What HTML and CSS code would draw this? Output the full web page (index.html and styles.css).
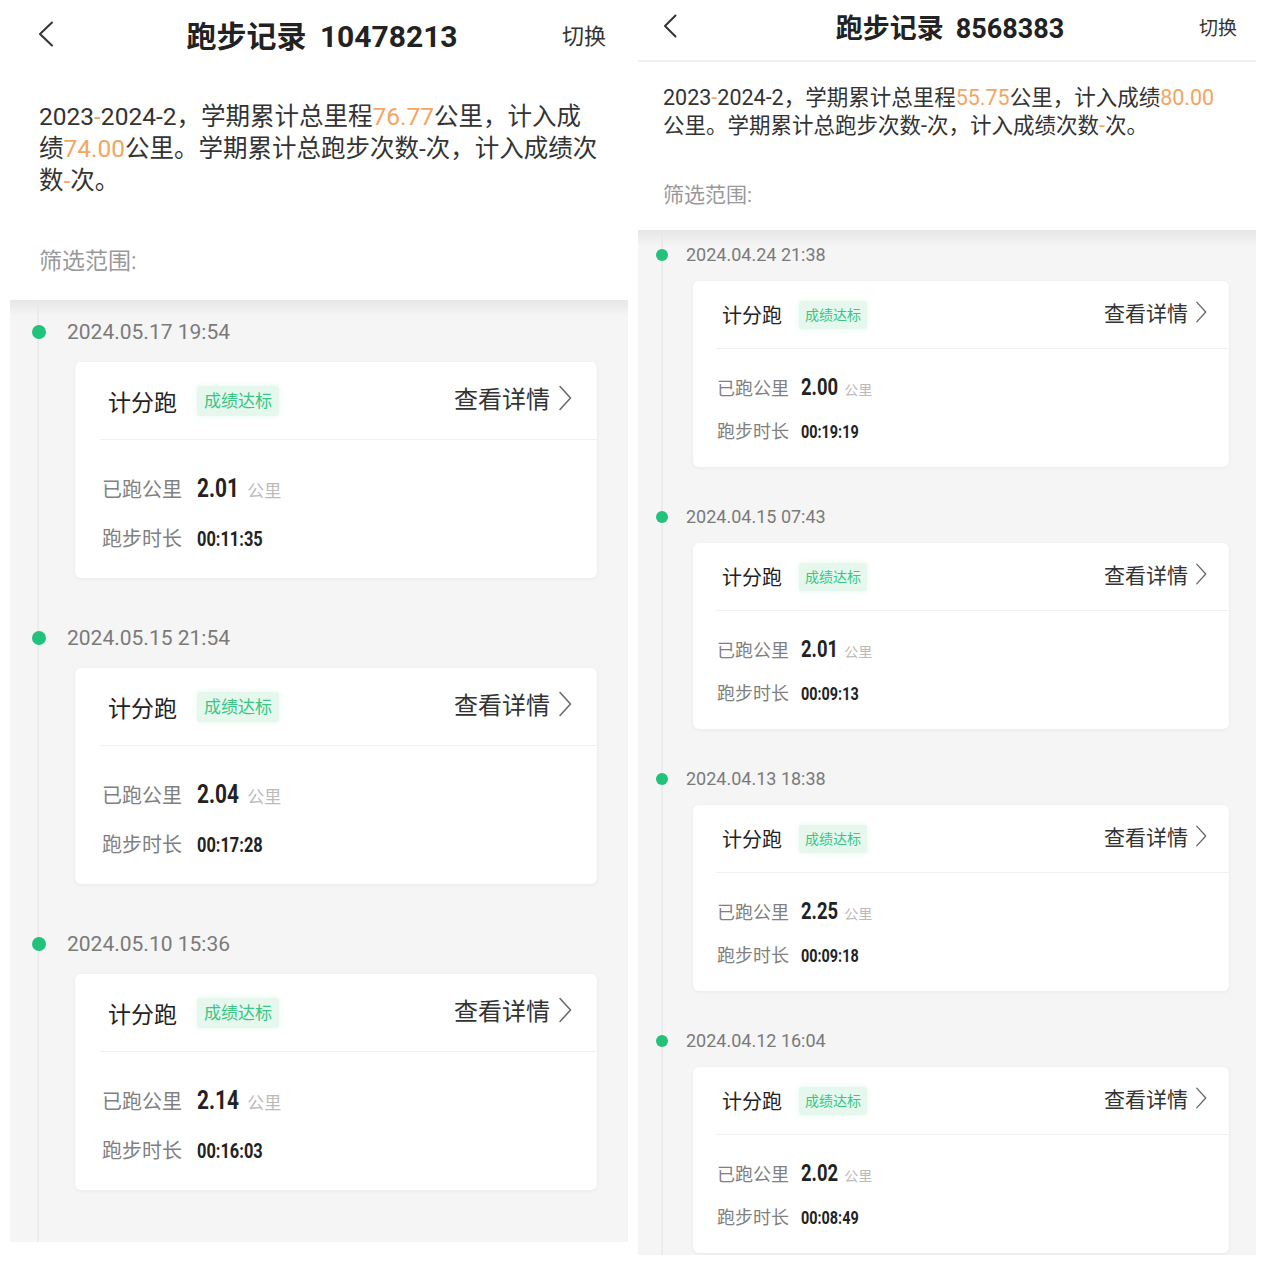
FILE: index.html
```html
<!DOCTYPE html>
<html lang="zh-CN">
<head>
  <meta charset="UTF-8">
  <meta name="viewport" content="width=device-width, initial-scale=1">
  <title>跑步记录</title>
  <link rel="stylesheet" href="styles.css">
</head>
<body>

  <div class="screens">

    <!-- 左边的截图 -->
    <section class="phone phone-a">
      <header class="topbar">
        <span class="back">
          <svg viewBox="0 0 16 26"><polyline points="14,1.5 2,13 14,24.5"/></svg>
        </span>
        <h1 class="title">跑步记录<span class="uid">10478213</span></h1>
        <span class="switch">切换</span>
      </header>

      <p class="summary">2023<em>-</em>2024-2，学期累计总里程<em>76.77</em>公里，计入成<br>绩<em>74.00</em>公里。学期累计总跑步次数-次，计入成绩次<br>数<em>-</em>次。</p>
      <div class="filter">筛选范围:</div>

      <ul class="records">
        <li class="record">
          <div class="record-time">2024.05.17 19:54</div>
          <div class="card">
            <div class="card-head">
              <span class="card-title">计分跑</span>
              <span class="badge">成绩达标</span>
              <span class="detail">查看详情<svg viewBox="0 0 14 26"><polyline points="2,1.5 12.5,13 2,24.5"/></svg></span>
            </div>
            <div class="stats">
              <div class="stat"><span class="stat-label">已跑公里</span><span class="stat-num">2.01</span><span class="stat-unit">公里</span></div>
              <div class="stat"><span class="stat-label">跑步时长</span><span class="stat-num time">00:11:35</span></div>
            </div>
          </div>
        </li>
        <li class="record">
          <div class="record-time">2024.05.15 21:54</div>
          <div class="card">
            <div class="card-head">
              <span class="card-title">计分跑</span>
              <span class="badge">成绩达标</span>
              <span class="detail">查看详情<svg viewBox="0 0 14 26"><polyline points="2,1.5 12.5,13 2,24.5"/></svg></span>
            </div>
            <div class="stats">
              <div class="stat"><span class="stat-label">已跑公里</span><span class="stat-num">2.04</span><span class="stat-unit">公里</span></div>
              <div class="stat"><span class="stat-label">跑步时长</span><span class="stat-num time">00:17:28</span></div>
            </div>
          </div>
        </li>
        <li class="record">
          <div class="record-time">2024.05.10 15:36</div>
          <div class="card">
            <div class="card-head">
              <span class="card-title">计分跑</span>
              <span class="badge">成绩达标</span>
              <span class="detail">查看详情<svg viewBox="0 0 14 26"><polyline points="2,1.5 12.5,13 2,24.5"/></svg></span>
            </div>
            <div class="stats">
              <div class="stat"><span class="stat-label">已跑公里</span><span class="stat-num">2.14</span><span class="stat-unit">公里</span></div>
              <div class="stat"><span class="stat-label">跑步时长</span><span class="stat-num time">00:16:03</span></div>
            </div>
          </div>
        </li>
      </ul>
    </section>

    <!-- 右边的截图 -->
    <section class="phone phone-b">
      <header class="topbar">
        <span class="back">
          <svg viewBox="0 0 14 24"><polyline points="12.5,1.5 2,12 12.5,22.5"/></svg>
        </span>
        <h1 class="title">跑步记录<span class="uid">8568383</span></h1>
        <span class="switch">切换</span>
      </header>

      <p class="summary">2023<em>-</em>2024-2，学期累计总里程<em>55.75</em>公里，计入成绩<em>80.00</em><br>公里。学期累计总跑步次数-次，计入成绩次数<em>-</em>次。</p>
      <div class="filter">筛选范围:</div>

      <ul class="records">
        <li class="record">
          <div class="record-time">2024.04.24 21:38</div>
          <div class="card">
            <div class="card-head">
              <span class="card-title">计分跑</span>
              <span class="badge">成绩达标</span>
              <span class="detail">查看详情<svg viewBox="0 0 14 26"><polyline points="2,1.5 12.5,13 2,24.5"/></svg></span>
            </div>
            <div class="stats">
              <div class="stat"><span class="stat-label">已跑公里</span><span class="stat-num">2.00</span><span class="stat-unit">公里</span></div>
              <div class="stat"><span class="stat-label">跑步时长</span><span class="stat-num time">00:19:19</span></div>
            </div>
          </div>
        </li>
        <li class="record">
          <div class="record-time">2024.04.15 07:43</div>
          <div class="card">
            <div class="card-head">
              <span class="card-title">计分跑</span>
              <span class="badge">成绩达标</span>
              <span class="detail">查看详情<svg viewBox="0 0 14 26"><polyline points="2,1.5 12.5,13 2,24.5"/></svg></span>
            </div>
            <div class="stats">
              <div class="stat"><span class="stat-label">已跑公里</span><span class="stat-num">2.01</span><span class="stat-unit">公里</span></div>
              <div class="stat"><span class="stat-label">跑步时长</span><span class="stat-num time">00:09:13</span></div>
            </div>
          </div>
        </li>
        <li class="record">
          <div class="record-time">2024.04.13 18:38</div>
          <div class="card">
            <div class="card-head">
              <span class="card-title">计分跑</span>
              <span class="badge">成绩达标</span>
              <span class="detail">查看详情<svg viewBox="0 0 14 26"><polyline points="2,1.5 12.5,13 2,24.5"/></svg></span>
            </div>
            <div class="stats">
              <div class="stat"><span class="stat-label">已跑公里</span><span class="stat-num">2.25</span><span class="stat-unit">公里</span></div>
              <div class="stat"><span class="stat-label">跑步时长</span><span class="stat-num time">00:09:18</span></div>
            </div>
          </div>
        </li>
        <li class="record">
          <div class="record-time">2024.04.12 16:04</div>
          <div class="card">
            <div class="card-head">
              <span class="card-title">计分跑</span>
              <span class="badge">成绩达标</span>
              <span class="detail">查看详情<svg viewBox="0 0 14 26"><polyline points="2,1.5 12.5,13 2,24.5"/></svg></span>
            </div>
            <div class="stats">
              <div class="stat"><span class="stat-label">已跑公里</span><span class="stat-num">2.02</span><span class="stat-unit">公里</span></div>
              <div class="stat"><span class="stat-label">跑步时长</span><span class="stat-num time">00:08:49</span></div>
            </div>
          </div>
        </li>
      </ul>
    </section>

  </div>

</body>
</html>
```

FILE: styles.css
```css
/* — reset & fonts — */
* { margin:0; padding:0; box-sizing:border-box; }
body { font-family: Roboto, "Noto Sans CJK SC", sans-serif; background:#fff; color:#333; }
ul { list-style:none; }
em { font-style:normal; color:#f3a562; }

/* — two screenshots side by side — */
.screens {
  display: flex;
  gap: 10px;
  padding-left: 10px;
  align-items: flex-start;
}
.phone { width: 618px; }

/* — top bar — */
.topbar {
  display: grid;
  grid-template-columns: 1fr auto 1fr;
  align-items: center;
}
.back { justify-self: start; display: flex; }
.back svg { fill: none; stroke: #333; stroke-width: 2; stroke-linecap: round; stroke-linejoin: round; }
.title { font-weight: bold; color: #222; }
.uid { margin-left: .45em; }
.switch { justify-self: end; color: #333; }

/* — records list (grey area) — */
.records {
  background-color: #f5f5f5;
  background-image:
    linear-gradient(#e6e6e6, rgba(245,245,245,0) 16px),
    linear-gradient(90deg, transparent 27px, #ececec 27px, #ececec 29px, transparent 29px);
}
.record-time {
  display: flex;
  align-items: center;
  color: #7a7a7a;
}
.record-time::before {
  content: '';
  border-radius: 50%;
  background: #22c27b;
  flex-shrink: 0;
}
.card {
  background: #fff;
  border-radius: 6px;
  box-shadow: 0 1px 4px rgba(0,0,0,0.05);
}
.card-head {
  display: flex;
  align-items: center;
  border-bottom: 1px solid #f0f0f0;
}
.card-title { color: #222; }
.badge {
  background: #e6f8ee;
  color: #3bc584;
  border-radius: 3px;
  box-shadow: 0 0 6px #e6f8ee;
}
.detail {
  margin-left: auto;
  display: flex;
  align-items: center;
  color: #333;
}
.detail svg { fill: none; stroke: #666; stroke-width: 1.5; stroke-linecap: round; stroke-linejoin: round; }
.stat { display: flex; align-items: baseline; }
.stat-label { color: #808080; }
/* 数字是窄体：没有窄字体，只能横向压一下 */
.stat-num {
  display: inline-block;
  font-family: Roboto, sans-serif;
  font-weight: bold;
  color: #222;
  transform: scaleX(.8);
  transform-origin: left;
}
.stat-unit { color: #bbb; }

/* — left screenshot sizes — */
.phone-a .topbar { height: 68px; padding: 0 22px 0 28px; }
.phone-a .back svg { width: 16px; height: 26px; }
.phone-a .title { font-size: 30px; }
.phone-a .switch { font-size: 22px; }
.phone-a .summary { margin: 33px 0 0 29px; font-size: 24.5px; line-height: 32px; }
.phone-a .filter { margin: 49px 0 0 29px; font-size: 23px; line-height: 32px; color: #999; }
.phone-a .records { margin-top: 22px; padding: 17px 31px 52px 0; }
.phone-a .record + .record { margin-top: 45px; }
.phone-a .record-time { padding-left: 22px; font-size: 21px; line-height: 30px; margin-bottom: 15px; }
.phone-a .record-time::before { width: 14px; height: 14px; margin-right: 21px; }
.phone-a .card { margin-left: 65px; height: 216px; }
.phone-a .card-head { height: 78px; margin-left: 25px; padding: 0 25px 0 8px; }
.phone-a .card-title { font-size: 23px; }
.phone-a .badge { margin-left: 20px; padding: 0 7px; font-size: 17px; line-height: 30px; }
.phone-a .detail { font-size: 24px; gap: 8px; margin-bottom: 6px; }
.phone-a .detail svg { width: 14px; height: 26px; }
.phone-a .stats { padding: 24px 0 0 27px; }
.phone-a .stat { line-height: 48px; }
.phone-a .stat-label { font-size: 20px; }
.phone-a .stat-num { margin: 0 -10px 0 15px; font-size: 26px; }
.phone-a .stat-num.time { font-size: 20.5px; }
.phone-a .stat-unit { margin-left: 8px; font-size: 17px; }

/* — right screenshot sizes — */
.phone-b .topbar { height: 62px; padding: 0 19px 8px 25px; border-bottom: 2px solid #f1f1f1; }
.phone-b .back svg { width: 14px; height: 24px; }
.phone-b .title { font-size: 27px; }
.phone-b .switch { font-size: 19px; }
.phone-b .summary { margin: 22px 0 0 25px; font-size: 21.5px; line-height: 28px; }
.phone-b .filter { margin: 41px 0 0 25px; font-size: 21px; line-height: 28px; color: #999; }
.phone-b .records {
  margin-top: 21px;
  padding: 12px 27px 2px 0;
  background-image:
    linear-gradient(#e6e6e6, rgba(245,245,245,0) 16px),
    linear-gradient(90deg, transparent 23px, #ececec 23px, #ececec 25px, transparent 25px);
}
.phone-b .record + .record { margin-top: 37px; }
.phone-b .record-time { padding-left: 18px; font-size: 18px; line-height: 26px; margin-bottom: 13px; }
.phone-b .record-time::before { width: 12px; height: 12px; margin-right: 18px; }
.phone-b .card { margin-left: 55px; height: 186px; }
.phone-b .card-head { height: 68px; margin-left: 23px; padding: 0 22px 0 6px; }
.phone-b .card-title { font-size: 20px; }
.phone-b .badge { margin-left: 17px; padding: 0 6px; font-size: 14px; line-height: 28px; }
.phone-b .detail { font-size: 21px; gap: 7px; margin-bottom: 5px; }
.phone-b .detail svg { width: 12px; height: 24px; }
.phone-b .stats { padding: 18px 0 0 24px; }
.phone-b .stat { line-height: 42px; }
.phone-b .stat-label { font-size: 18px; }
.phone-b .stat-num { margin: 0 -9px 0 12px; font-size: 23px; }
.phone-b .stat-num.time { font-size: 18px; }
.phone-b .stat-unit { margin-left: 6px; font-size: 14px; }
```
